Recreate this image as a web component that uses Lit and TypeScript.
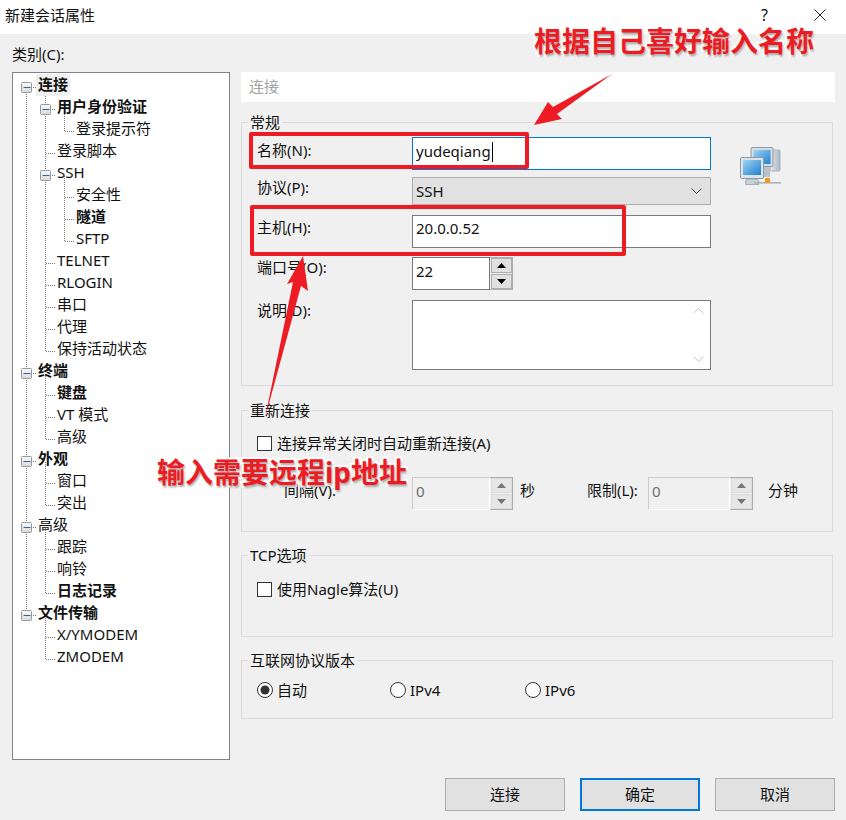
import { LitElement, html, css, svg } from "lit";
import { customElement } from "lit/decorators.js";

type Node = { t: string; d: number; b?: boolean; x?: boolean; sel?: boolean };
const NODES: Node[] = [
  { t: "连接", d: 0, b: true, x: true, sel: true },
  { t: "用户身份验证", d: 1, b: true, x: true },
  { t: "登录提示符", d: 2 },
  { t: "登录脚本", d: 1 },
  { t: "SSH", d: 1, x: true },
  { t: "安全性", d: 2 },
  { t: "隧道", d: 2, b: true },
  { t: "SFTP", d: 2 },
  { t: "TELNET", d: 1 },
  { t: "RLOGIN", d: 1 },
  { t: "串口", d: 1 },
  { t: "代理", d: 1 },
  { t: "保持活动状态", d: 1 },
  { t: "终端", d: 0, b: true, x: true },
  { t: "键盘", d: 1, b: true },
  { t: "VT 模式", d: 1 },
  { t: "高级", d: 1 },
  { t: "外观", d: 0, b: true, x: true },
  { t: "窗口", d: 1 },
  { t: "突出", d: 1 },
  { t: "高级", d: 0, x: true },
  { t: "跟踪", d: 1 },
  { t: "响铃", d: 1 },
  { t: "日志记录", d: 1, b: true },
  { t: "文件传输", d: 0, b: true, x: true },
  { t: "X/YMODEM", d: 1 },
  { t: "ZMODEM", d: 1 },
];

const colX = (d: number) => 13.5 + 19 * d;
const rowY = (i: number) => 14.5 + 22 * i;

function treeLines() {
  const out: unknown[] = [];
  NODES.forEach((n, i) => {
    const y = rowY(i);
    const x = colX(n.d);
    out.push(svg`<line class="dot" x1=${n.x ? x + 6 : x} x2=${x + 10} y1=${y} y2=${y}></line>`);
    let j = i - 1;
    while (j >= 0 && NODES[j].d > n.d) j--;
    if (j >= 0) {
      out.push(svg`<line class="dot" x1=${x} x2=${x} y1=${rowY(j)} y2=${y}></line>`);
    }
  });
  NODES.forEach((n, i) => {
    if (!n.x) return;
    const x = colX(n.d);
    const y = rowY(i);
    out.push(svg`<rect x=${x - 5} y=${y - 5} width="10" height="10" rx="1" fill="url(#exp)" stroke="#9a9a9a"></rect>
      <line x1=${x - 3} x2=${x + 4} y1=${y} y2=${y} stroke="#3b5fb0"></line>`);
  });
  return out;
}

@customElement("app-root")
export class AppRoot extends LitElement {
  static styles = css`
    :host {
      display: block;
      width: 846px;
      height: 820px;
      position: relative;
      overflow: hidden;
      background: #f0f0f0;
      color: #111;
      font: 15px/20px "Noto Sans", "Noto Sans CJK SC", sans-serif;
    }
    .title {
      height: 34px;
      background: #fff;
      display: flex;
      align-items: center;
      padding: 0 20px 4px 5px;
      box-sizing: border-box;
    }
    .title .name { flex: 1; }
    .title .help { margin-right: 46px; font-size: 16px; }
    .close { display: block; }
    .main {
      display: grid;
      grid-template-columns: 218px 594px;
      column-gap: 11px;
      padding-left: 12px;
    }
    .cat { padding-top: 10px; margin-bottom: 8px; }
    .tree {
      position: relative;
      box-sizing: border-box;
      height: 688px;
      background: #fff;
      border: 1px solid #82828c;
      padding-top: 1px;
    }
    .tree svg { position: absolute; left: 0; top: 0; }
    .dot { stroke: #777; stroke-dasharray: 1 1; shape-rendering: crispEdges; }
    .row { height: 22px; line-height: 21px; white-space: nowrap; position: relative; }
    .row span { display: inline-block; height: 22px; padding: 0 2px; }
    .d0 { padding-left: 23px; }
    .d1 { padding-left: 42px; }
    .d2 { padding-left: 61px; }
    .bold { font-weight: 700; }
    .sel { background: #f0f0f0; }
    .right { padding-top: 38px; }
    .head {
      height: 30px;
      line-height: 28px;
      background: #fff;
      color: #a3a3a3;
      padding-left: 8px;
    }
    .group {
      box-sizing: border-box;
      width: 592px;
      border: 1px solid #dcdcdc;
      padding-left: 15px;
    }
    .legend {
      margin: -11px 0 0 -9px;
      padding: 0 2px 0 2px;
      width: fit-content;
      background: #f0f0f0;
    }
    .g1 { margin-top: 20px; height: 264px; }
    .g2 { margin-top: 24px; height: 122px; }
    .g3 { margin-top: 23px; height: 82px; }
    .g4 { margin-top: 23px; height: 59px; }
    .g1body { display: flex; margin-top: 5px; }
    .form {
      display: grid;
      grid-template-columns: 155px 299px;
      grid-template-rows: 40px 38px 42px 43px 70px;
    }
    .lab1 { padding-top: 3px; }
    .lab2 { padding-top: 0; }
    .lab3 { padding-top: 2px; }
    .box {
      box-sizing: border-box;
      background: #fff;
      border: 1px solid #7a7a7a;
      padding: 0 3px;
      position: relative;
    }
    .name-box { height: 33px; line-height: 26px; }
    .host-box { height: 33px; line-height: 24px; }
    .focus { border-color: #0078d7; }
    .caret {
      display: inline-block;
      width: 1px;
      height: 20px;
      background: #000;
      vertical-align: -5px;
      margin-left: 1px;
    }
    .select {
      box-sizing: border-box;
      height: 28px;
      line-height: 28px;
      background: #e1e1e1;
      border: 1px solid #adadad;
      padding: 0 3px;
      display: flex;
      justify-content: space-between;
      align-items: center;
    }
    .select svg { margin-right: 5px; }
    .desc {
      height: 70px;
      display: flex;
      flex-direction: column;
      justify-content: space-between;
      align-items: flex-end;
      padding: 7px 6px 7px 0;
    }
    .netIcon { margin: 10px 0 0 29px; }
    .spin {
      box-sizing: border-box;
      height: 33px;
      display: flex;
      border: 1px solid #adadad;
      line-height: 27px;
    }
    .spin .val {
      flex: 1;
      margin: -1px 0 -1px -1px;
      background: #fff;
      border: 1px solid #7a7a7a;
      padding: 0 3px;
    }
    .spin.off .val {
      background: #f0f0f0;
      border-color: #fff;
      border-top-color: #ccc;
      border-left-color: #ccc;
      color: #6d6d6d;
    }
    .arrows { display: flex; flex-direction: column; gap: 1px; padding: 0 0 0 1px; width: 21px; }
    .arrows div {
      flex: 1;
      background: #e1e1e1;
      border: 1px solid #adadad;
      display: flex;
      align-items: center;
      justify-content: center;
    }
    .off .arrows div { border-color: #dcdcdc; background: #e6e6e6; }
    .check { display: flex; align-items: center; gap: 5px; }
    .cb {
      box-sizing: border-box;
      width: 15px;
      height: 15px;
      background: #fff;
      border: 1px solid #333;
    }
    .cbrow1 { margin-top: 13px; }
    .cbrow2 { margin-top: 14px; }
    .interval { display: flex; margin-top: 24px; }
    .interval .lbl { padding-top: 3px; }
    .iv { width: 128px; margin-left: 27px; }
    .sec { width: 67px; margin-left: 7px; }
    .lim { width: 61px; }
    .mins { margin-left: 15px; }
    .w101 { width: 101px; }
    .w105 { width: 105px; }
    .radios { display: flex; margin-top: 10px; }
    .radio { display: flex; align-items: center; gap: 4px; }
    .rw1 { width: 133px; }
    .rw2 { width: 135px; }
    .foot {
      display: flex;
      justify-content: flex-end;
      gap: 15px;
      padding-right: 11px;
      margin-top: 18px;
    }
    .btn {
      box-sizing: border-box;
      width: 120px;
      height: 33px;
      line-height: 30px;
      text-align: center;
      background: #e1e1e1;
      border: 1px solid #adadad;
    }
    .btn.def { border: 2px solid #0078d7; line-height: 28px; }
    .mark { position: absolute; box-sizing: border-box; border: 4px solid #ed1c24; border-radius: 2px; }
    .m1 { left: 249px; top: 132px; width: 280px; height: 37px; }
    .m2 { left: 250px; top: 205px; width: 376px; height: 51px; }
    .arrowsvg { position: absolute; left: 0; top: 0; }
    .note {
      position: absolute;
      font: 700 28px/28px "Noto Sans", "Noto Sans CJK SC", sans-serif;
      color: #ed1c24;
      white-space: nowrap;
      -webkit-text-stroke: 4px #fff;
      paint-order: stroke fill;
      text-shadow: 1px 2px 2px rgba(0, 0, 0, 0.35);
    }
    .n1 { left: 534px; top: 27px; }
    .n2 { left: 157px; top: 458px; }
  `;

  private up(c = "#000") {
    return html`<svg width="9" height="5" viewBox="0 0 9 5"><path d="M4.5 0L9 5H0z" fill=${c}></path></svg>`;
  }
  private down(c = "#000") {
    return html`<svg width="9" height="5" viewBox="0 0 9 5"><path d="M0 0H9L4.5 5z" fill=${c}></path></svg>`;
  }
  private spin(v: string, w: string, off = false) {
    const c = off ? "#777" : "#000";
    return html`<div class="spin ${w} ${off ? "off" : ""}">
      <div class="val">${v}</div>
      <div class="arrows"><div>${this.up(c)}</div><div>${this.down(c)}</div></div>
    </div>`;
  }

  private netIcon() {
    return html`<svg class="netIcon" width="41" height="41" viewBox="0 0 41 41">
      <defs>
        <linearGradient id="scr" x1="0" y1="0" x2="1" y2="1">
          <stop offset="0" stop-color="#9fd4f5"></stop>
          <stop offset="1" stop-color="#1f7fd0"></stop>
        </linearGradient>
        <linearGradient id="tw" x1="0" y1="0" x2="1" y2="0">
          <stop offset="0" stop-color="#e8eef2"></stop>
          <stop offset="1" stop-color="#a9b6bf"></stop>
        </linearGradient>
      </defs>
      <rect x="30" y="3" width="10" height="21" rx="1" fill="url(#tw)" stroke="#a8b2b8"></rect>
      <rect x="11" y="0.5" width="22" height="19" rx="1" fill="#d5dde2" stroke="#8f9ba3"></rect>
      <rect x="13.5" y="3" width="17" height="14" fill="url(#scr)"></rect>
      <rect x="24" y="20" width="6" height="10" fill="#b7c2c9"></rect>
      <rect x="0.5" y="10.5" width="23" height="21" rx="1.5" fill="#dde4e8" stroke="#8f9ba3"></rect>
      <rect x="3" y="13" width="18" height="15" fill="url(#scr)"></rect>
      <path d="M7 32h10l2 3H18l1 2.5H5.5L6 35H5z" fill="#c9d2d8" stroke="#8f9ba3" stroke-width="0.7"></path>
      <rect x="14" y="35" width="27" height="1.6" fill="#a9b4bb"></rect>
      <rect x="25" y="31" width="5" height="5" fill="#f0981c"></rect>
    </svg>`;
  }

  render() {
    return html`
      <div class="title">
        <div class="name">新建会话属性</div>
        <div class="help">?</div>
        <svg class="close" width="12" height="12" viewBox="0 0 12 12">
          <path d="M.5.5l11 11M11.5.5l-11 11" stroke="#222" fill="none"></path>
        </svg>
      </div>
      <div class="main">
        <div>
          <div class="cat">类别(C):</div>
          <div class="tree">
            <svg width="216" height="686">
              <defs>
                <linearGradient id="exp" x1="0" y1="0" x2="0" y2="1">
                  <stop offset="0" stop-color="#fafafa"></stop>
                  <stop offset="1" stop-color="#d8d8d8"></stop>
                </linearGradient>
              </defs>
              ${treeLines()}
            </svg>
            ${NODES.map(
              (n) => html`<div class="row d${n.d} ${n.b ? "bold" : ""}"><span class=${n.sel ? "sel" : ""}>${n.t}</span></div>`
            )}
          </div>
        </div>
        <div class="right">
          <div class="head">连接</div>
          <div class="group g1">
            <div class="legend">常规</div>
            <div class="g1body">
              <div class="form">
                <div class="lab1">名称(N):</div>
                <div><div class="box name-box focus">yudeqiang<i class="caret"></i></div></div>
                <div class="lab2">协议(P):</div>
                <div><div class="select">SSH
                  <svg width="11" height="6" viewBox="0 0 11 6"><path d="M.5.5l5 5 5-5" stroke="#444" fill="none"></path></svg>
                </div></div>
                <div class="lab3">主机(H):</div>
                <div><div class="box host-box">20.0.0.52</div></div>
                <div class="lab2">端口号(O):</div>
                <div>${this.spin("22", "w101")}</div>
                <div class="lab2">说明(D):</div>
                <div class="box desc">
                  <svg width="11" height="6" viewBox="0 0 11 6"><path d="M.5 5.5l5-5 5 5" stroke="#c8c8c8" fill="none"></path></svg>
                  <svg width="11" height="6" viewBox="0 0 11 6"><path d="M.5.5l5 5 5-5" stroke="#c8c8c8" fill="none"></path></svg>
                </div>
              </div>
              ${this.netIcon()}
            </div>
          </div>
          <div class="group g2">
            <div class="legend">重新连接</div>
            <div class="check cbrow1"><div class="cb"></div>连接异常关闭时自动重新连接(A)</div>
            <div class="interval">
              <div class="lbl iv">间隔(V):</div>
              ${this.spin("0", "w101", true)}
              <div class="lbl sec">秒</div>
              <div class="lbl lim">限制(L):</div>
              ${this.spin("0", "w105", true)}
              <div class="lbl mins">分钟</div>
            </div>
          </div>
          <div class="group g3">
            <div class="legend">TCP选项</div>
            <div class="check cbrow2"><div class="cb"></div>使用Nagle算法(U)</div>
          </div>
          <div class="group g4">
            <div class="legend">互联网协议版本</div>
            <div class="radios">
              <div class="radio rw1">
                <svg width="16" height="16" viewBox="0 0 16 16"><circle cx="8" cy="8" r="7.5" fill="#fff" stroke="#333"></circle><circle cx="8" cy="8" r="4.5" fill="#333"></circle></svg>自动
              </div>
              <div class="radio rw2">
                <svg width="16" height="16" viewBox="0 0 16 16"><circle cx="8" cy="8" r="7.5" fill="#fff" stroke="#333"></circle></svg>IPv4
              </div>
              <div class="radio">
                <svg width="16" height="16" viewBox="0 0 16 16"><circle cx="8" cy="8" r="7.5" fill="#fff" stroke="#333"></circle></svg>IPv6
              </div>
            </div>
          </div>
        </div>
      </div>
      <div class="foot">
        <div class="btn">连接</div>
        <div class="btn def">确定</div>
        <div class="btn">取消</div>
      </div>

      <div class="mark m1"></div>
      <div class="mark m2"></div>
      <svg class="arrowsvg" width="846" height="820">
        <path d="M612 74L553 107 548 102 534 125 562 119 557 114z" fill="#ed1c24"></path>
        <path d="M265 418L293 282 287 284 303 256 308 291 301 286z" fill="#ed1c24"></path>
      </svg>
      <div class="note n1">根据自己喜好输入名称</div>
      <div class="note n2">输入需要远程ip地址</div>
    `;
  }
}
